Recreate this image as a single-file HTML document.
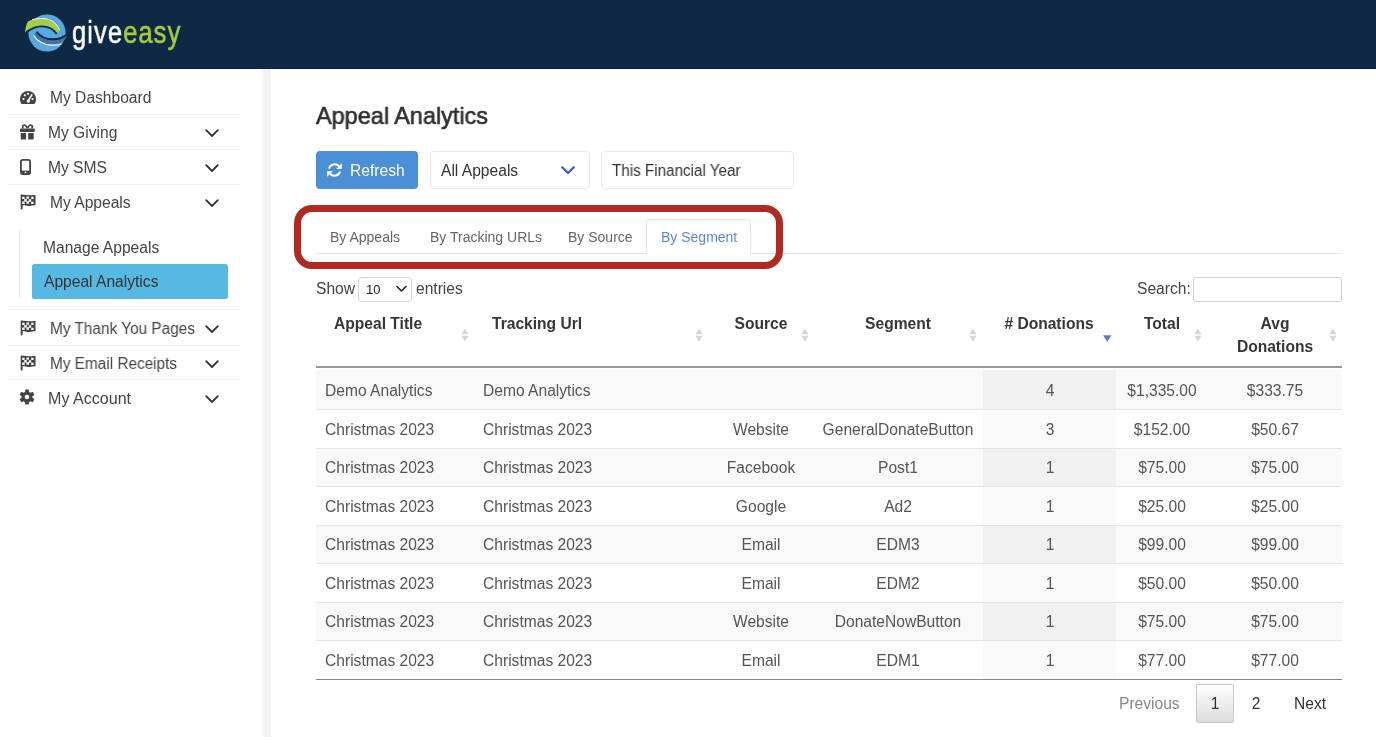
<!DOCTYPE html>
<html><head><meta charset="utf-8">
<style>
*{box-sizing:border-box;margin:0;padding:0}
html,body{width:1376px;height:754px;overflow:hidden;background:#fff;font-family:"Liberation Sans",sans-serif;color:#444}
.abs{position:absolute}
.t{position:absolute;white-space:nowrap;will-change:transform}
#hdr{position:absolute;left:0;top:0;width:1376px;height:69px;background:#0f2846;border-bottom:1.5px solid #0c213f}
#logo-t{position:absolute;left:72px;top:12px;font-size:32px;line-height:40px;transform-origin:0 0;transform:scaleX(.8);letter-spacing:1.3px;-webkit-text-stroke:0.6px;will-change:transform}
</style></head><body>
<div id="hdr"></div>
<svg class="abs" style="left:20px;top:10px" width="52" height="48" viewBox="20 10 52 48">
    <circle cx="47" cy="33" r="18.6" fill="#56a9e1"/>
    <path d="M25 32.6 C25.5 28 26.3 24.5 27.8 21.6 C31 19.8 36 18.8 42 18.8 C50 18.8 56.5 22.5 59.8 30.8 L56.6 33.6 C53 28 48 25.8 42 25.8 C35 25.8 29 28.5 25 32.6Z" fill="#a6ce45"/>
    <path d="M32 19.6 C36 18.7 39 18.5 42 18.5 C50 18.5 56.5 22.5 59.5 30" fill="none" stroke="#fff" stroke-width="1"/>
    <path d="M26.5 32.2 C31.5 28.2 36.5 26.4 42 26.4 C48 26.4 53 28.6 56.8 34" fill="none" stroke="#0f2846" stroke-width="1.9"/>
    <path d="M36.5 31.8 C40 36.5 46 39.3 53 39.3 C59 39.3 63.5 37.5 67.6 34 C66.5 39.5 61 44.5 52 45 C44 45.5 37 41 33.6 35.2Z" fill="#3f73a6"/>
    <path d="M36.5 31.8 C40 36.5 46 39.3 53 39.3 C59 39.3 63.5 37.5 67.6 34" fill="none" stroke="#0f2846" stroke-width="1.9"/>
    <path d="M33.6 35.2 C37 41 44 45 51 45.2 C55 45.3 58.5 45 61.5 44" fill="none" stroke="#fff" stroke-width="1.2"/>
</svg>
<div id="logo-t"><span style="color:#fff;-webkit-text-stroke-color:#fff">give</span><span style="color:#a6cc3f;-webkit-text-stroke-color:#a6cc3f">easy</span></div>
<div class="abs" style="left:263px;top:69px;width:8px;height:668px;background:#f3f3f3"></div>
<div class="t" style="left:49.5px;top:89.00px;font-size:15.6px;line-height:18.72px;color:#444;font-weight:normal;">My Dashboard</div>
<div class="t" style="left:48px;top:124.00px;font-size:15.6px;line-height:18.72px;color:#444;font-weight:normal;">My Giving</div>
<div class="t" style="left:48px;top:159.00px;font-size:15.6px;line-height:18.72px;color:#444;font-weight:normal;">My SMS</div>
<div class="t" style="left:49.5px;top:194.00px;font-size:15.6px;line-height:18.72px;color:#444;font-weight:normal;">My Appeals</div>
<div class="t" style="left:49.7px;top:319.50px;font-size:15.6px;line-height:18.72px;color:#444;font-weight:normal;transform:scaleX(0.986);transform-origin:0 0;">My Thank You Pages</div>
<div class="t" style="left:49.7px;top:354.50px;font-size:15.6px;line-height:18.72px;color:#444;font-weight:normal;transform:scaleX(0.984);transform-origin:0 0;">My Email Receipts</div>
<div class="t" style="left:48px;top:389.50px;font-size:15.6px;line-height:18.72px;color:#444;font-weight:normal;transform:scaleX(1.03);transform-origin:0 0;">My Account</div>
<div class="abs" style="left:8px;top:114px;width:232px;height:1px;background:#f2f2f2"></div>
<div class="abs" style="left:8px;top:149px;width:232px;height:1px;background:#f2f2f2"></div>
<div class="abs" style="left:8px;top:184px;width:232px;height:1px;background:#f2f2f2"></div>
<div class="abs" style="left:8px;top:309px;width:232px;height:1px;background:#f2f2f2"></div>
<div class="abs" style="left:8px;top:345px;width:232px;height:1px;background:#f2f2f2"></div>
<div class="abs" style="left:8px;top:379px;width:232px;height:1px;background:#f2f2f2"></div>
<svg class="abs" style="left:205px;top:129px" width="14" height="9" viewBox="0 0 14 9"><path d="M1.2 1.2 L7 7 L12.8 1.2" fill="none" stroke="#333" stroke-width="1.8" stroke-linecap="round" stroke-linejoin="round"/></svg>
<svg class="abs" style="left:205px;top:164px" width="14" height="9" viewBox="0 0 14 9"><path d="M1.2 1.2 L7 7 L12.8 1.2" fill="none" stroke="#333" stroke-width="1.8" stroke-linecap="round" stroke-linejoin="round"/></svg>
<svg class="abs" style="left:205px;top:199px" width="14" height="9" viewBox="0 0 14 9"><path d="M1.2 1.2 L7 7 L12.8 1.2" fill="none" stroke="#333" stroke-width="1.8" stroke-linecap="round" stroke-linejoin="round"/></svg>
<svg class="abs" style="left:205px;top:324.5px" width="14" height="9" viewBox="0 0 14 9"><path d="M1.2 1.2 L7 7 L12.8 1.2" fill="none" stroke="#333" stroke-width="1.8" stroke-linecap="round" stroke-linejoin="round"/></svg>
<svg class="abs" style="left:205px;top:359.5px" width="14" height="9" viewBox="0 0 14 9"><path d="M1.2 1.2 L7 7 L12.8 1.2" fill="none" stroke="#333" stroke-width="1.8" stroke-linecap="round" stroke-linejoin="round"/></svg>
<svg class="abs" style="left:205px;top:394.5px" width="14" height="9" viewBox="0 0 14 9"><path d="M1.2 1.2 L7 7 L12.8 1.2" fill="none" stroke="#333" stroke-width="1.8" stroke-linecap="round" stroke-linejoin="round"/></svg>
<div class="abs" style="left:19px;top:230px;width:1px;height:68px;background:#ececec"></div>
<div class="t" style="left:42.6px;top:239.00px;font-size:15.6px;line-height:18.72px;color:#444;font-weight:normal;">Manage Appeals</div>
<div class="abs" style="left:32px;top:264px;width:196px;height:34.5px;background:#55b9e2;border-radius:2.5px"></div>
<div class="t" style="left:43.5px;top:273.00px;font-size:15.6px;line-height:18.72px;color:#333;font-weight:normal;">Appeal Analytics</div>
<svg class="abs" style="left:19px;top:90px" width="18" height="15" viewBox="0 0 18 15">
<path d="M9 1 A8 8 0 0 0 1 9 C1 11 1.6 12.6 2.6 14 L15.4 14 C16.4 12.6 17 11 17 9 A8 8 0 0 0 9 1Z" fill="#444"/>
<circle cx="4.5" cy="9" r="1.1" fill="#fff"/><circle cx="5.8" cy="5.3" r="1.1" fill="#fff"/><circle cx="9" cy="3.8" r="1.1" fill="#fff"/><circle cx="13.5" cy="9" r="1.1" fill="#fff"/>
<path d="M12.8 4.8 L9.6 10.2" stroke="#fff" stroke-width="1.6" stroke-linecap="round"/><circle cx="9.3" cy="11" r="1.7" fill="#fff"/>
</svg>
<svg class="abs" style="left:19px;top:124px" width="17" height="16" viewBox="0 0 17 16">
<path d="M8.4 4.3 C7.5 1.5 5.8 0.9 4.6 1.3 C3.2 1.8 3.3 3.6 4.6 4.1 M8.6 4.3 C9.5 1.5 11.2 0.9 12.4 1.3 C13.8 1.8 13.7 3.6 12.4 4.1" fill="none" stroke="#444" stroke-width="1.7"/>
<rect x="1" y="4.4" width="14.8" height="3.6" rx="1" fill="#444"/>
<path d="M1.7 9 L7.1 9 L7.1 15.6 L2.7 15.6 Q1.7 15.6 1.7 14.6Z M9.2 9 L14.7 9 L14.7 14.6 Q14.7 15.6 13.7 15.6 L9.2 15.6Z" fill="#444"/>
</svg>
<svg class="abs" style="left:20px;top:159px" width="11" height="16" viewBox="0 0 11 16">
<rect x="0.9" y="0.9" width="9.2" height="14.2" rx="1.8" fill="none" stroke="#444" stroke-width="1.8"/>
<rect x="0.9" y="11.6" width="9.2" height="3.5" fill="#444"/><circle cx="5.5" cy="13.3" r="0.85" fill="#fff"/>
</svg>
<svg class="abs" style="left:19px;top:193.5px" width="17" height="16" viewBox="0 0 17 16">
<rect x="1.7" y="0.6" width="1.9" height="14.8" rx="0.6" fill="#444"/>
<path d="M2.3 1.2 C5 0.2 8 1.6 11 1.3 C13 1.1 14.6 0.7 16.5 1.1 L16.5 11.4 C14.6 11.1 13 11.6 11 11.9 C8 12.4 5 10.6 2.3 11.5Z" fill="#444"/>
<path d="M3.2 2.7h2.4v2.4h-2.4ZM7.5 2.4h2.4v2.4h-2.4ZM12.2 2.7h2.4v2.4h-2.4ZM5.3 5.1h2.4v2.4h-2.4ZM9.8 5.3h2.4v2.4h-2.4ZM3.2 7.5h2.4v2.4h-2.4ZM7.5 7.3h2.4v2.4h-2.4ZM12.2 7.7h2.4v2.4h-2.4Z" fill="#fff"/>
</svg>
<svg class="abs" style="left:19px;top:319.5px" width="17" height="16" viewBox="0 0 17 16">
<rect x="1.7" y="0.6" width="1.9" height="14.8" rx="0.6" fill="#444"/>
<path d="M2.3 1.2 C5 0.2 8 1.6 11 1.3 C13 1.1 14.6 0.7 16.5 1.1 L16.5 11.4 C14.6 11.1 13 11.6 11 11.9 C8 12.4 5 10.6 2.3 11.5Z" fill="#444"/>
<path d="M3.2 2.7h2.4v2.4h-2.4ZM7.5 2.4h2.4v2.4h-2.4ZM12.2 2.7h2.4v2.4h-2.4ZM5.3 5.1h2.4v2.4h-2.4ZM9.8 5.3h2.4v2.4h-2.4ZM3.2 7.5h2.4v2.4h-2.4ZM7.5 7.3h2.4v2.4h-2.4ZM12.2 7.7h2.4v2.4h-2.4Z" fill="#fff"/>
</svg>
<svg class="abs" style="left:19px;top:354.5px" width="17" height="16" viewBox="0 0 17 16">
<rect x="1.7" y="0.6" width="1.9" height="14.8" rx="0.6" fill="#444"/>
<path d="M2.3 1.2 C5 0.2 8 1.6 11 1.3 C13 1.1 14.6 0.7 16.5 1.1 L16.5 11.4 C14.6 11.1 13 11.6 11 11.9 C8 12.4 5 10.6 2.3 11.5Z" fill="#444"/>
<path d="M3.2 2.7h2.4v2.4h-2.4ZM7.5 2.4h2.4v2.4h-2.4ZM12.2 2.7h2.4v2.4h-2.4ZM5.3 5.1h2.4v2.4h-2.4ZM9.8 5.3h2.4v2.4h-2.4ZM3.2 7.5h2.4v2.4h-2.4ZM7.5 7.3h2.4v2.4h-2.4ZM12.2 7.7h2.4v2.4h-2.4Z" fill="#fff"/>
</svg>
<svg class="abs" style="left:19px;top:389px" width="16" height="16" viewBox="-8 -8 16 16">
<g fill="#444">
<rect x="-1.9" y="-7.6" width="3.8" height="15.2" rx="0.8"/>
<rect x="-1.9" y="-7.6" width="3.8" height="15.2" rx="0.8" transform="rotate(60)"/>
<rect x="-1.9" y="-7.6" width="3.8" height="15.2" rx="0.8" transform="rotate(120)"/>
<circle r="5.5"/></g><circle r="2.3" fill="#fff"/>
</svg>
<div class="t" style="left:316px;top:102.00px;font-size:24px;line-height:28.8px;color:#2e2e2e;font-weight:normal;-webkit-text-stroke:0.6px #2e2e2e;transform:scaleX(0.977);transform-origin:0 0;">Appeal Analytics</div>
<div class="abs" style="left:316px;top:151px;width:102px;height:38px;background:#4b8fd6;border-radius:4px"></div>
<svg class="abs" style="left:327px;top:162px" width="16" height="16" viewBox="0 0 16 16">
<path d="M2.0 6.6 A5.7 5.7 0 0 1 11.9 4.3" fill="none" stroke="#fff" stroke-width="2.1"/>
<path d="M9.3 6.9 L14.8 6.9 L14.8 1.3Z" fill="#fff"/>
<path d="M13.0 9.4 A5.7 5.7 0 0 1 3.1 11.7" fill="none" stroke="#fff" stroke-width="2.1"/>
<path d="M0.2 9.1 L5.7 9.1 L0.2 14.7Z" fill="#fff"/>
</svg>
<div class="t" style="left:349.5px;top:162.00px;font-size:15.6px;line-height:18.72px;color:#fff;font-weight:normal;">Refresh</div>
<div class="abs" style="left:430px;top:151px;width:160px;height:38px;background:#fff;border:1px solid #e9e9e9;border-radius:4px"></div>
<div class="t" style="left:441px;top:162.00px;font-size:15.6px;line-height:18.72px;color:#333;font-weight:normal;">All Appeals</div>
<svg class="abs" style="left:561px;top:166px" width="14" height="9" viewBox="0 0 14 9"><path d="M1.2 1.2 L7 7 L12.8 1.2" fill="none" stroke="#3b5bd1" stroke-width="2.2" stroke-linecap="round" stroke-linejoin="round"/></svg>
<div class="abs" style="left:601px;top:151px;width:193px;height:38px;background:#fff;border:1px solid #e9e9e9;border-radius:4px"></div>
<div class="t" style="left:612px;top:162.00px;font-size:15.6px;line-height:18.72px;color:#333;font-weight:normal;transform:scaleX(0.975);transform-origin:0 0;">This Financial Year</div>
<div class="abs" style="left:316px;top:253px;width:1026px;height:1px;background:#e6e6e6"></div>
<div class="abs" style="left:646px;top:219px;width:105px;height:35px;background:#fff;border:1px solid #e6e6e6;border-bottom:none;border-radius:3px 3px 0 0"></div>
<div class="t" style="left:330.3px;top:229.00px;font-size:14px;line-height:16.8px;color:#666;font-weight:normal;">By Appeals</div>
<div class="t" style="left:429.5px;top:229.00px;font-size:14px;line-height:16.8px;color:#666;font-weight:normal;">By Tracking URLs</div>
<div class="t" style="left:568px;top:229.00px;font-size:14px;line-height:16.8px;color:#666;font-weight:normal;">By Source</div>
<div class="t" style="left:660.8px;top:229.00px;font-size:14px;line-height:16.8px;color:#6284d9;font-weight:normal;">By Segment</div>
<div class="abs" style="left:294px;top:205px;width:489px;height:64px;border:7px solid #b12a21;border-radius:18px"></div>
<div class="t" style="left:315.5px;top:280.00px;font-size:15.6px;line-height:18.72px;color:#444;font-weight:normal;">Show</div>
<div class="abs" style="left:358px;top:277px;width:54px;height:24.5px;background:#fff;border:1px solid #d4d4d4;border-radius:4px"></div>
<div class="t" style="left:366px;top:282.00px;font-size:13px;line-height:15.6px;color:#222;font-weight:normal;">10</div>
<svg class="abs" style="left:396px;top:285px" width="11" height="8" viewBox="0 0 11 8"><path d="M1 1.5 L5.5 6 L10 1.5" fill="none" stroke="#222" stroke-width="1.6" stroke-linecap="round" stroke-linejoin="round"/></svg>
<div class="t" style="left:416px;top:280.00px;font-size:15.6px;line-height:18.72px;color:#444;font-weight:normal;">entries</div>
<div class="t" style="left:1137px;top:280.00px;font-size:15.6px;line-height:18.72px;color:#444;font-weight:normal;">Search:</div>
<div class="abs" style="left:1192.5px;top:277px;width:149.5px;height:25px;background:#fff;border:1px solid #d0d0d0;border-radius:3px"></div>
<div class="t" style="left:333.6px;top:315.00px;font-size:15.6px;line-height:18.72px;color:#363636;font-weight:bold;">Appeal Title</div>
<div class="t" style="left:492.2px;top:315.00px;font-size:15.6px;line-height:18.72px;color:#363636;font-weight:bold;">Tracking Url</div>
<div class="t" style="left:611px;width:300px;text-align:center;top:315.00px;font-size:15.6px;line-height:18.72px;color:#363636;font-weight:bold;">Source</div>
<div class="t" style="left:748px;width:300px;text-align:center;top:315.00px;font-size:15.6px;line-height:18.72px;color:#363636;font-weight:bold;">Segment</div>
<div class="t" style="left:899px;width:300px;text-align:center;top:315.00px;font-size:15.6px;line-height:18.72px;color:#363636;font-weight:bold;"># Donations</div>
<div class="t" style="left:1012px;width:300px;text-align:center;top:315.00px;font-size:15.6px;line-height:18.72px;color:#363636;font-weight:bold;">Total</div>
<div class="t" style="left:1125px;width:300px;text-align:center;top:315.00px;font-size:15.6px;line-height:18.72px;color:#363636;font-weight:bold;">Avg</div>
<div class="t" style="left:1125px;width:300px;text-align:center;top:337.50px;font-size:15.6px;line-height:18.72px;color:#363636;font-weight:bold;">Donations</div>
<svg class="abs" style="left:461.3px;top:328px" width="8" height="14" viewBox="0 0 8 14"><path d="M4 0.5 L7.6 6.3 L0.4 6.3Z M0.4 7.7 L7.6 7.7 L4 13.5Z" fill="#d6d6d6"/></svg>
<svg class="abs" style="left:695px;top:328px" width="8" height="14" viewBox="0 0 8 14"><path d="M4 0.5 L7.6 6.3 L0.4 6.3Z M0.4 7.7 L7.6 7.7 L4 13.5Z" fill="#d6d6d6"/></svg>
<svg class="abs" style="left:801px;top:328px" width="8" height="14" viewBox="0 0 8 14"><path d="M4 0.5 L7.6 6.3 L0.4 6.3Z M0.4 7.7 L7.6 7.7 L4 13.5Z" fill="#d6d6d6"/></svg>
<svg class="abs" style="left:969.4px;top:328px" width="8" height="14" viewBox="0 0 8 14"><path d="M4 0.5 L7.6 6.3 L0.4 6.3Z M0.4 7.7 L7.6 7.7 L4 13.5Z" fill="#d6d6d6"/></svg>
<svg class="abs" style="left:1194.3px;top:328px" width="8" height="14" viewBox="0 0 8 14"><path d="M4 0.5 L7.6 6.3 L0.4 6.3Z M0.4 7.7 L7.6 7.7 L4 13.5Z" fill="#d6d6d6"/></svg>
<svg class="abs" style="left:1329.3px;top:328px" width="8" height="14" viewBox="0 0 8 14"><path d="M4 0.5 L7.6 6.3 L0.4 6.3Z M0.4 7.7 L7.6 7.7 L4 13.5Z" fill="#d6d6d6"/></svg>
<svg class="abs" style="left:1103px;top:334.5px" width="8.5" height="7" viewBox="0 0 8.5 7"><path d="M0 0.3 L8.5 0.3 L4.25 6.8Z" fill="#6a72d8"/></svg>
<div class="abs" style="left:316px;top:366px;width:1026px;height:2px;background:#9a9a9a"></div>
<div class="abs" style="left:316px;top:370px;width:1026px;height:39.0px;background:#f9f9f9"></div>
<div class="abs" style="left:983px;top:370px;width:133px;height:39.0px;background:#f1f1f1"></div>
<div class="abs" style="left:316px;top:409.0px;width:1026px;height:1.0px;background:#e4e4e4"></div>
<div class="t" style="left:325px;top:382.00px;font-size:15.6px;line-height:18.72px;color:#555;font-weight:normal;">Demo Analytics</div>
<div class="t" style="left:483px;top:382.00px;font-size:15.6px;line-height:18.72px;color:#555;font-weight:normal;">Demo Analytics</div>
<div class="t" style="left:899.5px;width:300px;text-align:center;top:382.00px;font-size:15.6px;line-height:18.72px;color:#555;font-weight:normal;">4</div>
<div class="t" style="left:1012.3px;width:300px;text-align:center;top:382.00px;font-size:15.6px;line-height:18.72px;color:#555;font-weight:normal;">$1,335.00</div>
<div class="t" style="left:1124.8px;width:300px;text-align:center;top:382.00px;font-size:15.6px;line-height:18.72px;color:#555;font-weight:normal;">$333.75</div>
<div class="abs" style="left:983px;top:410.0px;width:133px;height:37.5px;background:#fafafa"></div>
<div class="abs" style="left:316px;top:447.5px;width:1026px;height:1.0px;background:#e4e4e4"></div>
<div class="t" style="left:325px;top:420.50px;font-size:15.6px;line-height:18.72px;color:#555;font-weight:normal;">Christmas 2023</div>
<div class="t" style="left:483px;top:420.50px;font-size:15.6px;line-height:18.72px;color:#555;font-weight:normal;">Christmas 2023</div>
<div class="t" style="left:611px;width:300px;text-align:center;top:420.50px;font-size:15.6px;line-height:18.72px;color:#555;font-weight:normal;">Website</div>
<div class="t" style="left:748px;width:300px;text-align:center;top:420.50px;font-size:15.6px;line-height:18.72px;color:#555;font-weight:normal;">GeneralDonateButton</div>
<div class="t" style="left:899.5px;width:300px;text-align:center;top:420.50px;font-size:15.6px;line-height:18.72px;color:#555;font-weight:normal;">3</div>
<div class="t" style="left:1012.3px;width:300px;text-align:center;top:420.50px;font-size:15.6px;line-height:18.72px;color:#555;font-weight:normal;">$152.00</div>
<div class="t" style="left:1124.8px;width:300px;text-align:center;top:420.50px;font-size:15.6px;line-height:18.72px;color:#555;font-weight:normal;">$50.67</div>
<div class="abs" style="left:316px;top:448.5px;width:1026px;height:37.5px;background:#f9f9f9"></div>
<div class="abs" style="left:983px;top:448.5px;width:133px;height:37.5px;background:#f1f1f1"></div>
<div class="abs" style="left:316px;top:486.0px;width:1026px;height:1.0px;background:#e4e4e4"></div>
<div class="t" style="left:325px;top:459.00px;font-size:15.6px;line-height:18.72px;color:#555;font-weight:normal;">Christmas 2023</div>
<div class="t" style="left:483px;top:459.00px;font-size:15.6px;line-height:18.72px;color:#555;font-weight:normal;">Christmas 2023</div>
<div class="t" style="left:611px;width:300px;text-align:center;top:459.00px;font-size:15.6px;line-height:18.72px;color:#555;font-weight:normal;">Facebook</div>
<div class="t" style="left:748px;width:300px;text-align:center;top:459.00px;font-size:15.6px;line-height:18.72px;color:#555;font-weight:normal;">Post1</div>
<div class="t" style="left:899.5px;width:300px;text-align:center;top:459.00px;font-size:15.6px;line-height:18.72px;color:#555;font-weight:normal;">1</div>
<div class="t" style="left:1012.3px;width:300px;text-align:center;top:459.00px;font-size:15.6px;line-height:18.72px;color:#555;font-weight:normal;">$75.00</div>
<div class="t" style="left:1124.8px;width:300px;text-align:center;top:459.00px;font-size:15.6px;line-height:18.72px;color:#555;font-weight:normal;">$75.00</div>
<div class="abs" style="left:983px;top:487.0px;width:133px;height:37.5px;background:#fafafa"></div>
<div class="abs" style="left:316px;top:524.5px;width:1026px;height:1.0px;background:#e4e4e4"></div>
<div class="t" style="left:325px;top:497.50px;font-size:15.6px;line-height:18.72px;color:#555;font-weight:normal;">Christmas 2023</div>
<div class="t" style="left:483px;top:497.50px;font-size:15.6px;line-height:18.72px;color:#555;font-weight:normal;">Christmas 2023</div>
<div class="t" style="left:611px;width:300px;text-align:center;top:497.50px;font-size:15.6px;line-height:18.72px;color:#555;font-weight:normal;">Google</div>
<div class="t" style="left:748px;width:300px;text-align:center;top:497.50px;font-size:15.6px;line-height:18.72px;color:#555;font-weight:normal;">Ad2</div>
<div class="t" style="left:899.5px;width:300px;text-align:center;top:497.50px;font-size:15.6px;line-height:18.72px;color:#555;font-weight:normal;">1</div>
<div class="t" style="left:1012.3px;width:300px;text-align:center;top:497.50px;font-size:15.6px;line-height:18.72px;color:#555;font-weight:normal;">$25.00</div>
<div class="t" style="left:1124.8px;width:300px;text-align:center;top:497.50px;font-size:15.6px;line-height:18.72px;color:#555;font-weight:normal;">$25.00</div>
<div class="abs" style="left:316px;top:525.5px;width:1026px;height:37.5px;background:#f9f9f9"></div>
<div class="abs" style="left:983px;top:525.5px;width:133px;height:37.5px;background:#f1f1f1"></div>
<div class="abs" style="left:316px;top:563.0px;width:1026px;height:1.0px;background:#e4e4e4"></div>
<div class="t" style="left:325px;top:536.00px;font-size:15.6px;line-height:18.72px;color:#555;font-weight:normal;">Christmas 2023</div>
<div class="t" style="left:483px;top:536.00px;font-size:15.6px;line-height:18.72px;color:#555;font-weight:normal;">Christmas 2023</div>
<div class="t" style="left:611px;width:300px;text-align:center;top:536.00px;font-size:15.6px;line-height:18.72px;color:#555;font-weight:normal;">Email</div>
<div class="t" style="left:748px;width:300px;text-align:center;top:536.00px;font-size:15.6px;line-height:18.72px;color:#555;font-weight:normal;">EDM3</div>
<div class="t" style="left:899.5px;width:300px;text-align:center;top:536.00px;font-size:15.6px;line-height:18.72px;color:#555;font-weight:normal;">1</div>
<div class="t" style="left:1012.3px;width:300px;text-align:center;top:536.00px;font-size:15.6px;line-height:18.72px;color:#555;font-weight:normal;">$99.00</div>
<div class="t" style="left:1124.8px;width:300px;text-align:center;top:536.00px;font-size:15.6px;line-height:18.72px;color:#555;font-weight:normal;">$99.00</div>
<div class="abs" style="left:983px;top:564.0px;width:133px;height:37.5px;background:#fafafa"></div>
<div class="abs" style="left:316px;top:601.5px;width:1026px;height:1.0px;background:#e4e4e4"></div>
<div class="t" style="left:325px;top:574.50px;font-size:15.6px;line-height:18.72px;color:#555;font-weight:normal;">Christmas 2023</div>
<div class="t" style="left:483px;top:574.50px;font-size:15.6px;line-height:18.72px;color:#555;font-weight:normal;">Christmas 2023</div>
<div class="t" style="left:611px;width:300px;text-align:center;top:574.50px;font-size:15.6px;line-height:18.72px;color:#555;font-weight:normal;">Email</div>
<div class="t" style="left:748px;width:300px;text-align:center;top:574.50px;font-size:15.6px;line-height:18.72px;color:#555;font-weight:normal;">EDM2</div>
<div class="t" style="left:899.5px;width:300px;text-align:center;top:574.50px;font-size:15.6px;line-height:18.72px;color:#555;font-weight:normal;">1</div>
<div class="t" style="left:1012.3px;width:300px;text-align:center;top:574.50px;font-size:15.6px;line-height:18.72px;color:#555;font-weight:normal;">$50.00</div>
<div class="t" style="left:1124.8px;width:300px;text-align:center;top:574.50px;font-size:15.6px;line-height:18.72px;color:#555;font-weight:normal;">$50.00</div>
<div class="abs" style="left:316px;top:602.5px;width:1026px;height:37.5px;background:#f9f9f9"></div>
<div class="abs" style="left:983px;top:602.5px;width:133px;height:37.5px;background:#f1f1f1"></div>
<div class="abs" style="left:316px;top:640.0px;width:1026px;height:1.0px;background:#e4e4e4"></div>
<div class="t" style="left:325px;top:613.00px;font-size:15.6px;line-height:18.72px;color:#555;font-weight:normal;">Christmas 2023</div>
<div class="t" style="left:483px;top:613.00px;font-size:15.6px;line-height:18.72px;color:#555;font-weight:normal;">Christmas 2023</div>
<div class="t" style="left:611px;width:300px;text-align:center;top:613.00px;font-size:15.6px;line-height:18.72px;color:#555;font-weight:normal;">Website</div>
<div class="t" style="left:748px;width:300px;text-align:center;top:613.00px;font-size:15.6px;line-height:18.72px;color:#555;font-weight:normal;">DonateNowButton</div>
<div class="t" style="left:899.5px;width:300px;text-align:center;top:613.00px;font-size:15.6px;line-height:18.72px;color:#555;font-weight:normal;">1</div>
<div class="t" style="left:1012.3px;width:300px;text-align:center;top:613.00px;font-size:15.6px;line-height:18.72px;color:#555;font-weight:normal;">$75.00</div>
<div class="t" style="left:1124.8px;width:300px;text-align:center;top:613.00px;font-size:15.6px;line-height:18.72px;color:#555;font-weight:normal;">$75.00</div>
<div class="abs" style="left:983px;top:641.0px;width:133px;height:37.5px;background:#fafafa"></div>
<div class="t" style="left:325px;top:651.50px;font-size:15.6px;line-height:18.72px;color:#555;font-weight:normal;">Christmas 2023</div>
<div class="t" style="left:483px;top:651.50px;font-size:15.6px;line-height:18.72px;color:#555;font-weight:normal;">Christmas 2023</div>
<div class="t" style="left:611px;width:300px;text-align:center;top:651.50px;font-size:15.6px;line-height:18.72px;color:#555;font-weight:normal;">Email</div>
<div class="t" style="left:748px;width:300px;text-align:center;top:651.50px;font-size:15.6px;line-height:18.72px;color:#555;font-weight:normal;">EDM1</div>
<div class="t" style="left:899.5px;width:300px;text-align:center;top:651.50px;font-size:15.6px;line-height:18.72px;color:#555;font-weight:normal;">1</div>
<div class="t" style="left:1012.3px;width:300px;text-align:center;top:651.50px;font-size:15.6px;line-height:18.72px;color:#555;font-weight:normal;">$77.00</div>
<div class="t" style="left:1124.8px;width:300px;text-align:center;top:651.50px;font-size:15.6px;line-height:18.72px;color:#555;font-weight:normal;">$77.00</div>
<div class="abs" style="left:316px;top:679px;width:1026px;height:1px;background:#888"></div>
<div class="t" style="left:1118.5px;top:695.00px;font-size:15.6px;line-height:18.72px;color:#888;font-weight:normal;">Previous</div>
<div class="abs" style="left:1195.5px;top:683.5px;width:38.5px;height:39.0px;background:linear-gradient(#fff,#dcdcdc);border:1px solid #c8c8c8;border-radius:2px"></div>
<div class="t" style="left:1064.8px;width:300px;text-align:center;top:695.00px;font-size:15.6px;line-height:18.72px;color:#333;font-weight:normal;">1</div>
<div class="t" style="left:1106px;width:300px;text-align:center;top:695.00px;font-size:15.6px;line-height:18.72px;color:#333;font-weight:normal;">2</div>
<div class="t" style="left:1294px;top:695.00px;font-size:15.6px;line-height:18.72px;color:#333;font-weight:normal;">Next</div>
</body></html>
